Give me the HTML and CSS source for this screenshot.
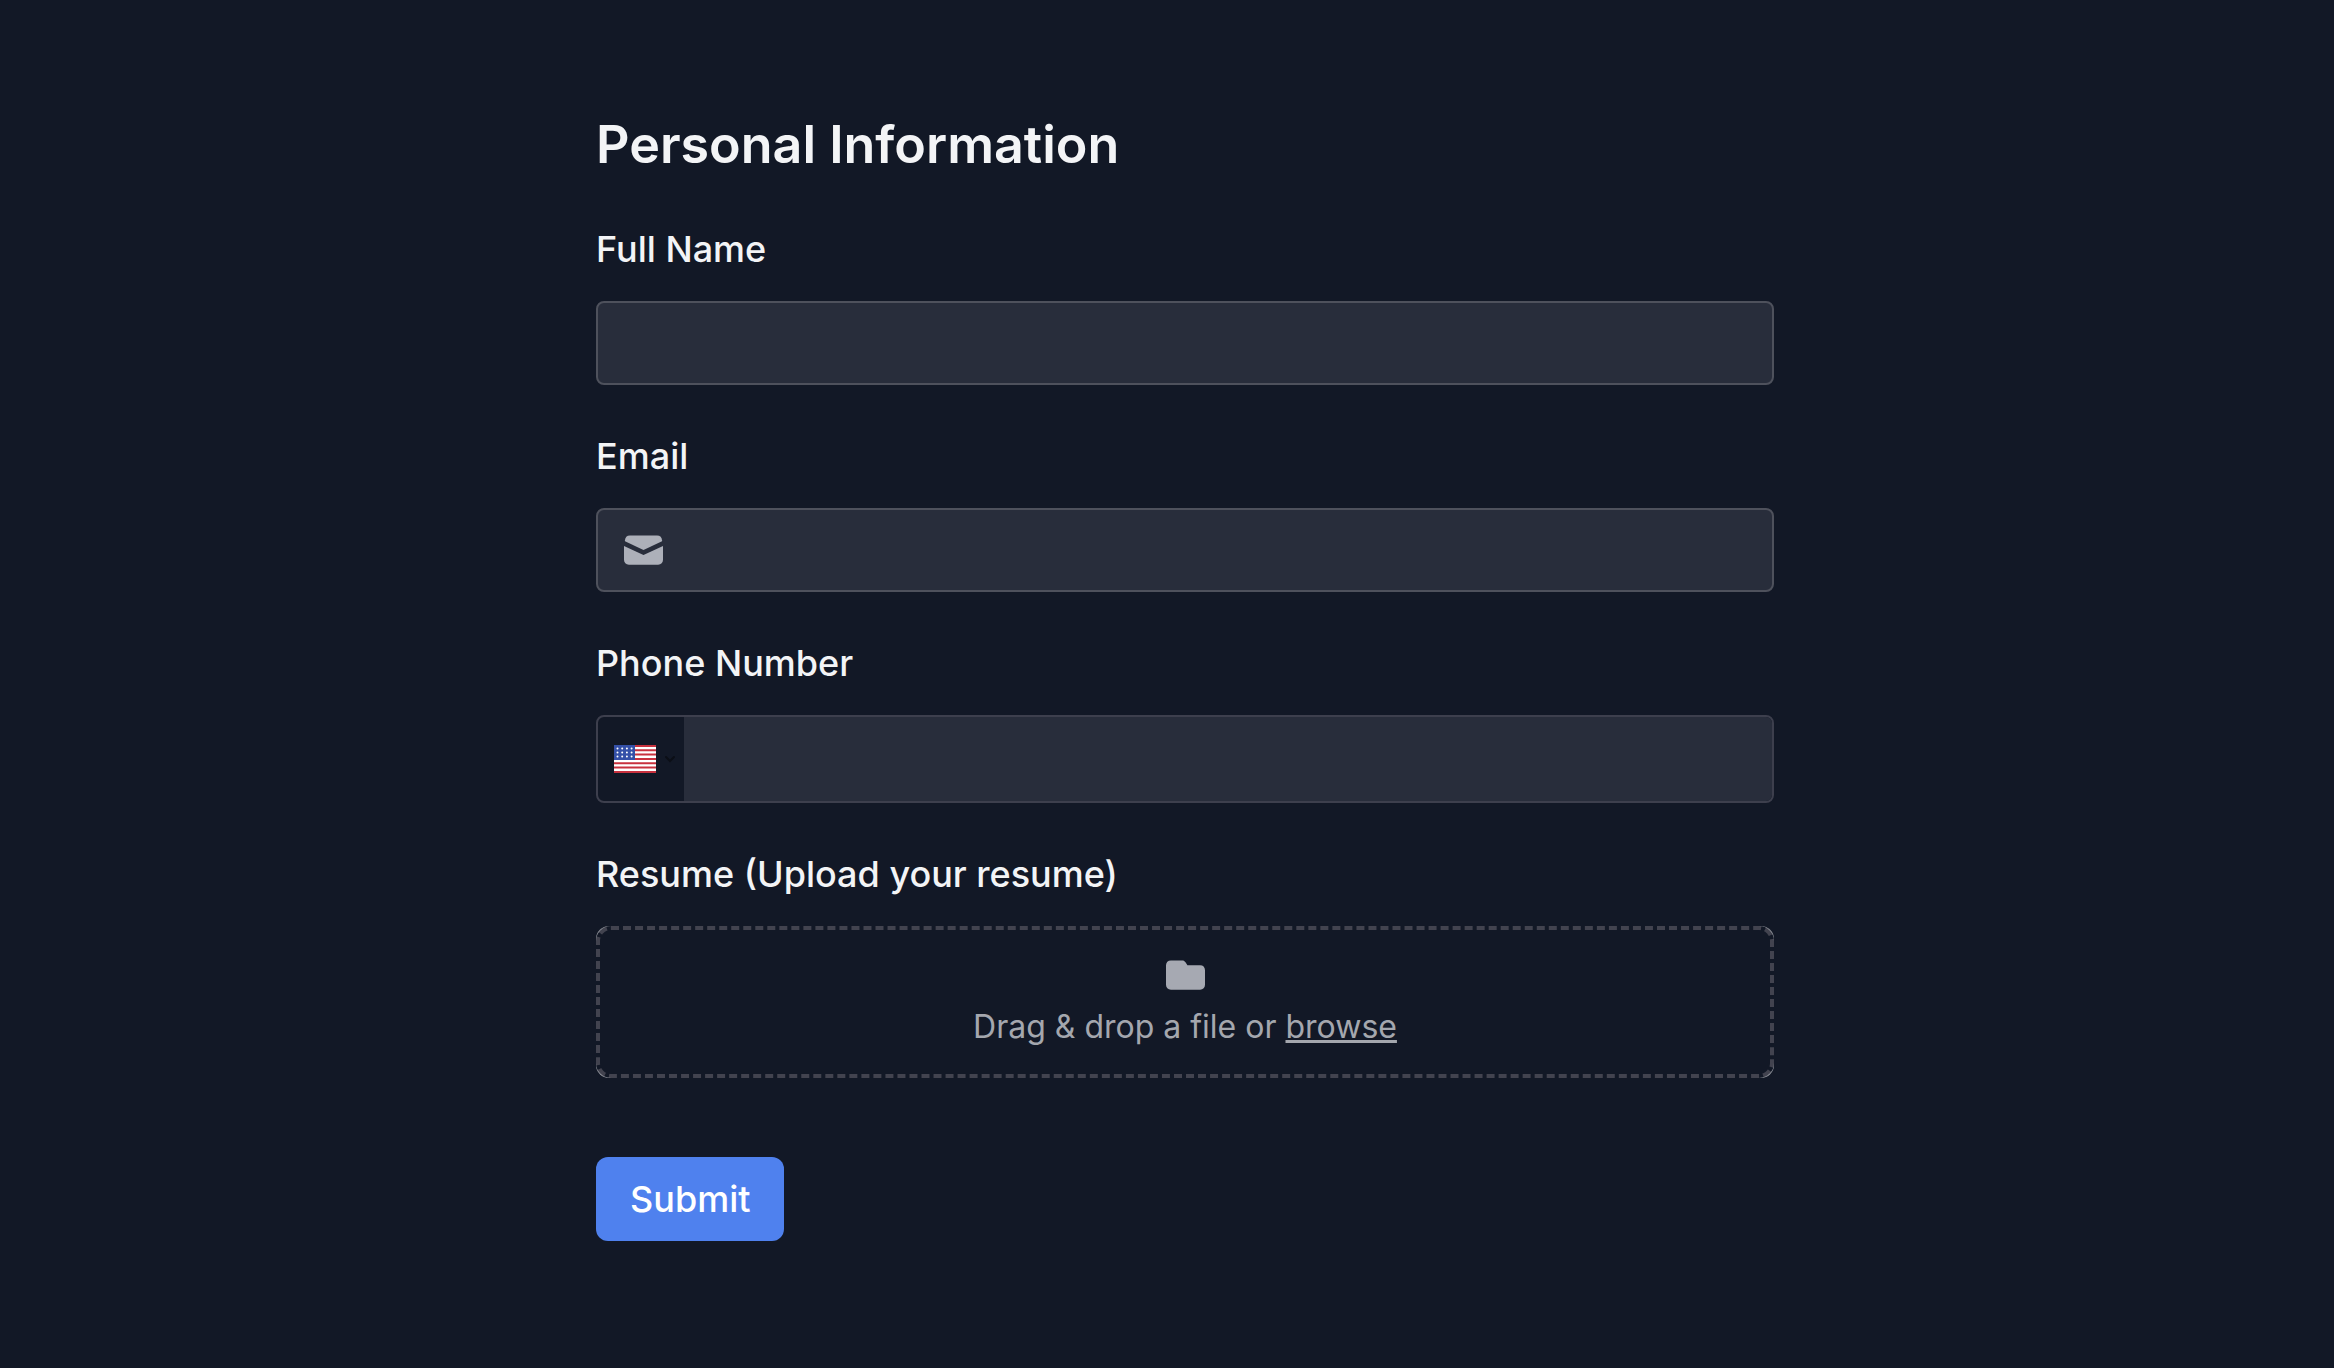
FILE: index.html
```
<!DOCTYPE html>
<html lang="en">
<head>
	<meta charset="UTF-8"/>
	<meta name="viewport" content="width=device-width,initial-scale=1.0"/>
	<title>Personal Information</title>
	<link rel="stylesheet" href="styles.css">
</head>
<body>

<main>
	<form class="form">
		<h1>Personal Information</h1>

		<div class="field">
			<label for="name">Full Name</label>
			<input class="control" type="text" id="name" name="name">
		</div>

		<div class="field">
			<label for="email">Email</label>
			<div class="control icon-control">
				<svg class="icon mail" viewBox="0 0 40 30" aria-hidden="true">
					<path d="M6 0h28c3 0 5 2 5 5v1L20 15 1 6V5c0-3 2-5 5-5z"/>
					<path d="M0 11l20 9 20-9v14c0 3-2 5-5 5H5c-3 0-5-2-5-5z"/>
				</svg>
				<input type="email" id="email" name="email">
			</div>
		</div>

		<div class="field">
			<label for="phone">Phone Number</label>
			<div class="phone">
				<div class="country">
					<svg class="flag" viewBox="0 0 42 28" aria-hidden="true">
						<path fill="#fff" d="M0 0h42v28H0z"/>
						<path stroke="#c8313e" stroke-width="2" d="M0 1h42M0 5.3h42M0 9.6h42M0 14h42M0 18.3h42M0 22.6h42M0 27h42"/>
						<path fill="#3450a8" d="M0 0h21v15H0z"/>
						<path stroke="#fff" stroke-width="2" stroke-linecap="round" stroke-dasharray="0 4.7" d="M3.5 3.5h15M3.5 7.5h15M3.5 11.5h15"/>
					</svg>
					<svg class="chevron" viewBox="0 0 12 8" aria-hidden="true">
						<path d="M2 2l4 4 4-4"/>
					</svg>
					<select name="country" aria-label="Country">
						<option value="US">United States</option>
						<option value="CA">Canada</option>
						<option value="GB">United Kingdom</option>
					</select>
				</div>
				<input type="tel" id="phone" name="phone">
			</div>
		</div>

		<div class="field">
			<label for="resume">Resume (Upload your resume)</label>
			<div class="upload">
				<div class="drop">
					<input type="file" id="resume" name="resume">
					<svg class="icon" viewBox="0 0 40 30" aria-hidden="true">
						<path d="M5 0h12c1 0 2 .5 3 2l2 3h13c3 0 5 2 5 5v15c0 3-2 5-5 5H5c-3 0-5-2-5-5V5c0-3 2-5 5-5z"/>
					</svg>
					<p>Drag &amp; drop a file or <a href="#resume">browse</a></p>
				</div>
			</div>
		</div>

		<button class="submit" type="submit">Submit</button>
	</form>
</main>

</body>
</html>
```
FILE: styles.css
```
* {box-sizing: border-box;}
html, body {
	margin: 0;
}
body {
	background: #121826;
	color: #f3f4f6;
	font-family: Inter, sans-serif;
	font-size: 36px;
	min-height: 100vh;
}
main {
	padding: 113px 36px 112px 72px;
}
.form {
	margin: auto;
	max-width: 1178px;
}
h1 {
	font-size: 52px;
	font-weight: 600;
	line-height: 64px;
	margin: 0 0 48px;
}
.field {
	margin-bottom: 47px;
}
label {
	display: block;
	font-weight: 500;
	line-height: 48px;
	margin-bottom: 28px;
}
input, select, button {
	font: inherit;
	color: inherit;
}
input {
	background: none;
	border: none;
	min-width: 0;
	outline: none;
}
.control {
	background: #282d3b;
	border: 2px solid #4e515c;
	border-radius: 8px;
	display: block;
	height: 84px;
	padding: 0 26px;
	width: 100%;
}
.icon {
	fill: #a6a9b2;
	height: 30px;
	width: 39px;
}
.mail {
	fill: #adb0b9;
}
.icon-control {
	align-items: center;
	display: flex;
	gap: 20px;
}
.icon-control input, .phone > input {
	flex: 1;
	height: 100%;
	padding: 0;
}
.phone {
	border: 2px solid #3d3f4d;
	border-radius: 8px;
	display: flex;
	height: 88px;
	overflow: hidden;
}
.phone > input {
	background: #282d3b;
	padding: 0 20px;
}
.country {
	align-items: center;
	display: flex;
	gap: 8px;
	padding: 0 8px 0 16px;
	position: relative;
}
.country select {
	cursor: pointer;
	height: 100%;
	left: 0;
	opacity: 0;
	position: absolute;
	top: 0;
	width: 100%;
}
.flag {
	height: 28px;
	width: 42px;
}
.chevron {
	fill: none;
	height: 8px;
	stroke: #0b0e16;
	stroke-linecap: round;
	stroke-width: 2;
	width: 12px;
}
/* the lighter layer only shows at the rounded corners */
.upload {
	background: #8f929a;
	border-radius: 13px;
}
.drop {
	align-items: center;
	background: #121826;
	border: 4px dashed #42434f;
	border-radius: 15px;
	color: #a4a7ae;
	display: flex;
	flex-direction: column;
	gap: 14px;
	padding: 30px 20px 24px;
	position: relative;
}
.drop input {
	cursor: pointer;
	height: 100%;
	left: 0;
	opacity: 0;
	position: absolute;
	top: 0;
	width: 100%;
}
.drop p {
	font-size: 32px;
	line-height: 46px;
	margin: 0;
}
.drop a {
	color: inherit;
	text-decoration-thickness: 3px;
}
.submit {
	background: #4f81ee;
	border: none;
	border-radius: 12px;
	color: #fff;
	cursor: pointer;
	font-weight: 500;
	height: 84px;
	margin-top: 32px;
	padding: 0 34px;
}
```
